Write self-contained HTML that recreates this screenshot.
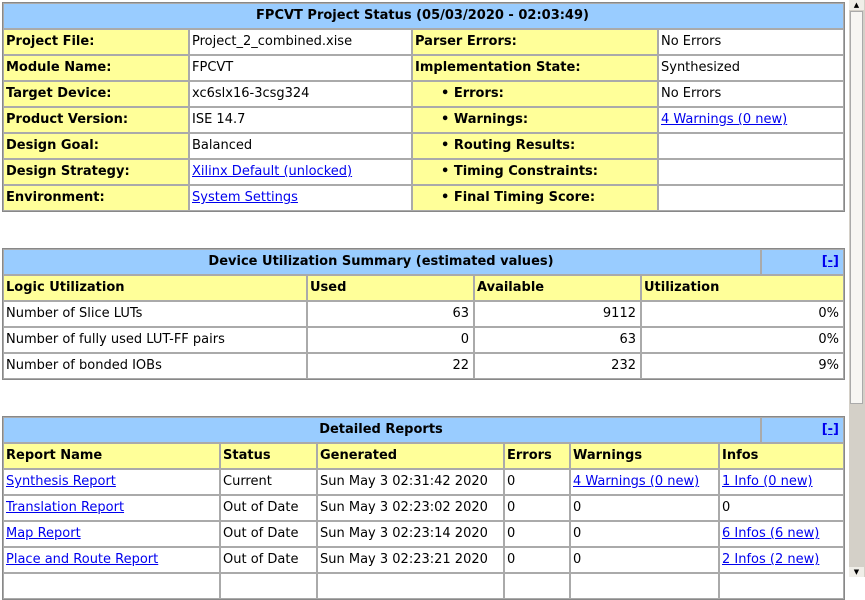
<!DOCTYPE html>
<html><head><meta charset="utf-8"><style>
body{margin:0;background:#fff;font-family:"DejaVu Sans","Liberation Sans",sans-serif;font-size:13px;color:#000;width:865px;height:577px;overflow:hidden;position:relative}
.t{position:absolute;left:2px;border:1px solid #888}
.r{display:flex;height:26px}
.c{box-sizing:border-box;height:26px;border:1px solid #aaa;padding:0 4px 0 2px;line-height:24px;white-space:nowrap;overflow:hidden}
.y{background:#ffff99;font-weight:bold}
.b{background:#99ccff;font-weight:bold;text-align:center}
.n{text-align:right}
a{color:#0000ee;text-decoration:underline}
.bl{padding-left:28px}
.sb{position:absolute;left:849px;top:0;width:16px;height:577px;background:#d4d0c8}
</style></head><body>
<div class="t" style="top:2px;width:841px">
<div class="r"><div class="c b" style="width:841px">FPCVT Project Status (05/03/2020 - 02:03:49)</div></div>
<div class="r"><div class="c y" style="width:186px">Project File:</div><div class="c" style="width:223px">Project_2_combined.xise</div><div class="c y" style="width:246px">Parser Errors:</div><div class="c" style="width:186px">No Errors</div></div>
<div class="r"><div class="c y" style="width:186px">Module Name:</div><div class="c" style="width:223px">FPCVT</div><div class="c y" style="width:246px">Implementation State:</div><div class="c" style="width:186px">Synthesized</div></div>
<div class="r"><div class="c y" style="width:186px">Target Device:</div><div class="c" style="width:223px">xc6slx16-3csg324</div><div class="c y bl" style="width:246px">• Errors:</div><div class="c" style="width:186px">No Errors</div></div>
<div class="r"><div class="c y" style="width:186px">Product Version:</div><div class="c" style="width:223px">ISE 14.7</div><div class="c y bl" style="width:246px">• Warnings:</div><div class="c" style="width:186px"><a>4 Warnings (0 new)</a></div></div>
<div class="r"><div class="c y" style="width:186px">Design Goal:</div><div class="c" style="width:223px">Balanced</div><div class="c y bl" style="width:246px">• Routing Results:</div><div class="c" style="width:186px"></div></div>
<div class="r"><div class="c y" style="width:186px">Design Strategy:</div><div class="c" style="width:223px"><a>Xilinx Default (unlocked)</a></div><div class="c y bl" style="width:246px">• Timing Constraints:</div><div class="c" style="width:186px"></div></div>
<div class="r"><div class="c y" style="width:186px">Environment:</div><div class="c" style="width:223px"><a>System Settings</a></div><div class="c y bl" style="width:246px">• Final Timing Score:</div><div class="c" style="width:186px"></div></div>
</div>

<div class="t" style="top:248px;width:841px">
<div class="r"><div class="c b" style="width:758px">Device Utilization Summary (estimated values)</div><div class="c b n" style="width:83px"><a>[-]</a></div></div>
<div class="r"><div class="c y" style="width:304px">Logic Utilization</div><div class="c y" style="width:167px">Used</div><div class="c y" style="width:167px">Available</div><div class="c y" style="width:203px">Utilization</div></div>
<div class="r"><div class="c" style="width:304px">Number of Slice LUTs</div><div class="c n" style="width:167px">63</div><div class="c n" style="width:167px">9112</div><div class="c n" style="width:203px">0%</div></div>
<div class="r"><div class="c" style="width:304px">Number of fully used LUT-FF pairs</div><div class="c n" style="width:167px">0</div><div class="c n" style="width:167px">63</div><div class="c n" style="width:203px">0%</div></div>
<div class="r"><div class="c" style="width:304px">Number of bonded IOBs</div><div class="c n" style="width:167px">22</div><div class="c n" style="width:167px">232</div><div class="c n" style="width:203px">9%</div></div>
</div>

<div class="t" style="top:416px;width:841px">
<div class="r"><div class="c b" style="width:758px">Detailed Reports</div><div class="c b n" style="width:83px"><a>[-]</a></div></div>
<div class="r"><div class="c y" style="width:217px">Report Name</div><div class="c y" style="width:97px">Status</div><div class="c y" style="width:187px">Generated</div><div class="c y" style="width:66px">Errors</div><div class="c y" style="width:149px">Warnings</div><div class="c y" style="width:125px">Infos</div></div>
<div class="r"><div class="c" style="width:217px"><a>Synthesis Report</a></div><div class="c" style="width:97px">Current</div><div class="c" style="width:187px">Sun May 3 02:31:42 2020</div><div class="c" style="width:66px">0</div><div class="c" style="width:149px"><a>4 Warnings (0 new)</a></div><div class="c" style="width:125px"><a>1 Info (0 new)</a></div></div>
<div class="r"><div class="c" style="width:217px"><a>Translation Report</a></div><div class="c" style="width:97px">Out of Date</div><div class="c" style="width:187px">Sun May 3 02:23:02 2020</div><div class="c" style="width:66px">0</div><div class="c" style="width:149px">0</div><div class="c" style="width:125px">0</div></div>
<div class="r"><div class="c" style="width:217px"><a>Map Report</a></div><div class="c" style="width:97px">Out of Date</div><div class="c" style="width:187px">Sun May 3 02:23:14 2020</div><div class="c" style="width:66px">0</div><div class="c" style="width:149px">0</div><div class="c" style="width:125px"><a>6 Infos (6 new)</a></div></div>
<div class="r"><div class="c" style="width:217px"><a>Place and Route Report</a></div><div class="c" style="width:97px">Out of Date</div><div class="c" style="width:187px">Sun May 3 02:23:21 2020</div><div class="c" style="width:66px">0</div><div class="c" style="width:149px">0</div><div class="c" style="width:125px"><a>2 Infos (2 new)</a></div></div>
<div class="r"><div class="c" style="width:217px"></div><div class="c" style="width:97px"></div><div class="c" style="width:187px"></div><div class="c" style="width:66px"></div><div class="c" style="width:149px"></div><div class="c" style="width:125px"></div></div>
</div>

<div class="sb">
<div style="position:absolute;left:0;top:0;width:15px;height:10px;background:#f0eee8;font-size:7px;text-align:center;line-height:10px">▲</div>
<div style="position:absolute;left:1px;top:11px;width:13px;height:393px;background:#f7f6f3;border:1px solid #aaa;box-sizing:border-box"></div>
<div style="position:absolute;left:0;top:567px;width:15px;height:10px;background:#f0eee8;font-size:7px;text-align:center;line-height:10px">▼</div>
</div>
</body></html>
